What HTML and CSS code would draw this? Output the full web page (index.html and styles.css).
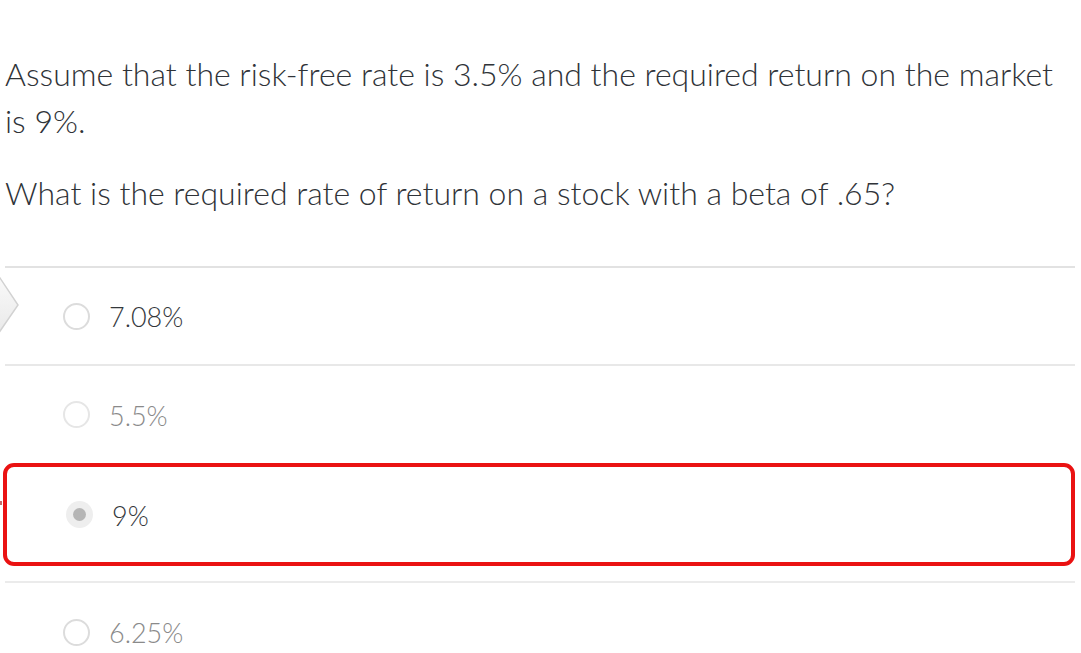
FILE: index.html
```html
<!DOCTYPE html>
<html>
<head>
<meta charset="utf-8">
<link rel="stylesheet" href="styles.css">
</head>
<body>
<div class="page">
  <div class="question">
    <p class="q-text first">Assume that the risk-free rate is 3.5% and the required return on the market is 9%.</p>
    <p class="q-text second">What is the required rate of return on a stock with a beta of .65?</p>
  </div>
  <div class="answers">
    <div class="answer row-1">
      <span class="radio"></span>
      <span class="label dark">7.08%</span>
    </div>
    <div class="answer row-2">
      <span class="radio faint"></span>
      <span class="label light">5.5%</span>
    </div>
    <div class="answer-wrap">
      <div class="answer selected">
        <span class="radio checked"><span class="dot"></span></span>
        <span class="label dark">9%</span>
      </div>
    </div>
    <div class="answer row-4">
      <span class="radio"></span>
      <span class="label light">6.25%</span>
    </div>
  </div>
  <svg class="pointer" width="20" height="62" viewBox="0 0 20 62">
    <defs>
      <linearGradient id="g" x1="0" y1="0" x2="0" y2="1">
        <stop offset="0" stop-color="#fafafa"/>
        <stop offset="1" stop-color="#e9e9e9"/>
      </linearGradient>
    </defs>
    <polygon points="-2,1 18,31 -2,60" fill="url(#g)" stroke="#d2d2d2" stroke-width="1.5"/>
  </svg>
  <span class="mark"></span>
</div>
</body>
</html>
```

FILE: styles.css
```css
html, body {
  margin: 0;
  padding: 0;
  background: #ffffff;
}

.page {
  position: relative;
  width: 1081px;
  height: 653px;
  overflow: hidden;
  font-family: "Lato", "Liberation Sans", sans-serif;
}

.question {
  padding: 50px 0 0 5px;
  width: 1065px;
}

.q-text {
  margin: 0;
  font-size: 32px;
  font-weight: 300;
  line-height: 47px;
  color: #2f3338;
}

.q-text.second {
  margin-top: 25px;
}

.answers {
  margin-top: 50px;
  margin-left: 5px;
  width: 1070px;
  border-top: 2px solid #e2e2e2;
}

.answer {
  display: flex;
  align-items: center;
  gap: 19px;
  height: 96px;
  padding-left: 58px;
  box-sizing: border-box;
}

.row-1 {
  height: 98px;
  border-bottom: 2px solid #e8e8e8;
}

.row-2 {
  height: 97px;
}

.answer-wrap {
  height: 120px;
  border-bottom: 2px solid #ebebeb;
  box-sizing: border-box;
}

.answer.selected {
  margin-left: -2px;
  height: 103px;
  border: 4px solid #ea1212;
  border-radius: 11px;
  padding-left: 59px;
}

.row-4 {
  height: 98px;
}

.radio {
  width: 27px;
  height: 27px;
  box-sizing: border-box;
  border: 2.5px solid #dcdcdc;
  border-radius: 50%;
  flex: none;
  display: flex;
  align-items: center;
  justify-content: center;
}

.radio.faint {
  border-color: #e6e6e6;
}

.radio.checked {
  border: none;
  background: #eeeeee;
}

.dot {
  width: 13px;
  height: 13px;
  border-radius: 50%;
  background: #b5b5b5;
}

.label {
  font-size: 27px;
  font-weight: 300;
  line-height: 30px;
  padding-top: 2px;
}

.label.dark {
  color: #34383c;
}

.label.light {
  color: #8a8a8a;
}

.pointer {
  position: absolute;
  left: 0;
  top: 274px;
}

.mark {
  position: absolute;
  left: 0;
  top: 501px;
  width: 2px;
  height: 4px;
  background: #c86a6a;
}
```
